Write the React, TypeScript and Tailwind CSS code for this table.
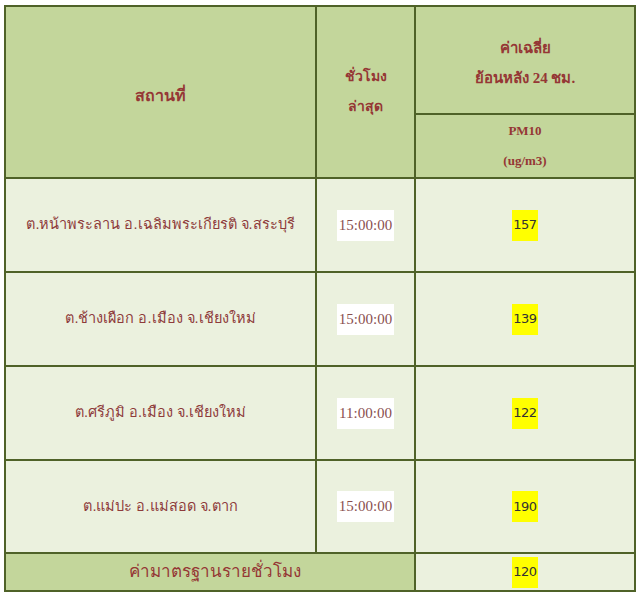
import React from "react";

const rows = [
  { place: "ต.หน้าพระลาน อ.เฉลิมพระเกียรติ จ.สระบุรี", time: "15:00:00", value: "157" },
  { place: "ต.ช้างเผือก อ.เมือง จ.เชียงใหม่", time: "15:00:00", value: "139" },
  { place: "ต.ศรีภูมิ อ.เมือง จ.เชียงใหม่", time: "11:00:00", value: "122" },
  { place: "ต.แม่ปะ อ.แม่สอด จ.ตาก", time: "15:00:00", value: "190" },
];

const head = "border-2 border-[#4f6228] bg-[#c3d69b] text-center align-middle font-bold text-[#953735] [font-family:'Liberation_Serif',serif]";
const cell = "border-2 border-[#4f6228] bg-[#ebf1de] text-center align-middle";

const Badge = ({ v }: { v: string }) => (
  <span className="inline-flex h-[31px] items-center bg-[#ffff00] px-[1px] text-[13px] text-[#333] [font-family:'DejaVu_Sans',sans-serif] tracking-[-0.5px]">
    {v}
  </span>
);

export default function App() {
  return (
    <div className="bg-white pl-[4px] pt-[5px]">
      <table className="w-[630px] table-fixed border-collapse border-2 border-[#4f6228]">
        <colgroup>
          <col className="w-[311px]" />
          <col className="w-[99px]" />
          <col className="w-[220px]" />
        </colgroup>
        <thead>
          <tr className="h-[108px]">
            <th rowSpan={2} className={`${head} text-[16px] pt-[8px]`}>สถานที่</th>
            <th rowSpan={2} className={`${head} text-[14px] font-semibold leading-[30px]`}>
              ชั่วโมง
              <br />
              ล่าสุด
            </th>
            <th className={`${head} text-[15px] leading-[30px] pt-[6px]`}>
              ค่าเฉลี่ย
              <br />
              ย้อนหลัง 24 ชม.
            </th>
          </tr>
          <tr className="h-[64px]">
            <th className={`${head} text-[13px] leading-[30px]`}>
              PM10
              <br />
              (ug/m3)
            </th>
          </tr>
        </thead>
        <tbody>
          {rows.map((r, i) => (
            <tr key={r.place} className={i === 3 ? "h-[93px]" : "h-[94px]"}>
              <td className={`${cell} text-[14.5px] text-[#8e3b3b] [font-family:'Liberation_Sans',sans-serif]`}>{r.place}</td>
              <td className={cell}>
                <span className="inline-flex h-[31px] items-center bg-white px-[2px] text-[15px] text-[#8a5050] [font-family:'Liberation_Serif',serif]">
                  {r.time}
                </span>
              </td>
              <td className={cell}>
                <Badge v={r.value} />
              </td>
            </tr>
          ))}
          <tr className="h-[38px]">
            <td colSpan={2} className={`${head} text-[17px] font-normal pl-[10px]`}>ค่ามาตรฐานรายชั่วโมง</td>
            <td className={cell}>
              <Badge v="120" />
            </td>
          </tr>
        </tbody>
      </table>
    </div>
  );
}
